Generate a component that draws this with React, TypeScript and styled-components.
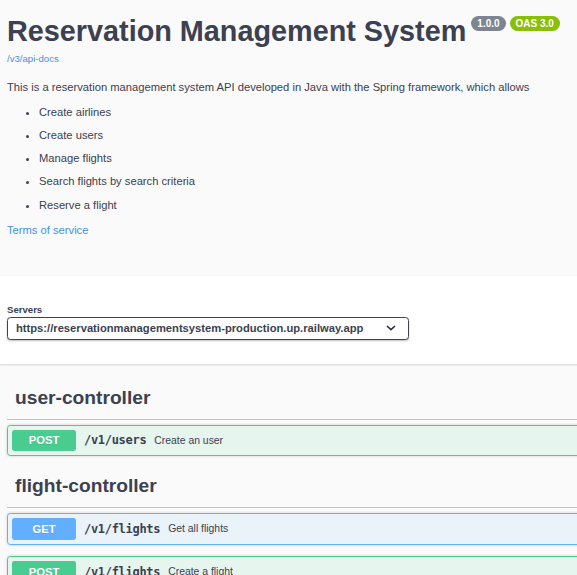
import React from 'react'
import styled, { createGlobalStyle } from 'styled-components'

const GlobalStyle = createGlobalStyle`
  html, body {
    margin: 0;
    padding: 0;
    overflow: hidden;
    background: #fafafa;
  }
  body {
    font-family: "Liberation Sans", Arial, sans-serif;
    color: #3b4151;
  }
`

const Page = styled.div`
  width: 720px;
  background: #fafafa;
`

const Wrapper = styled.div`
  padding: 0 7px;
`

const Info = styled.div`
  padding: 15px 0 37px;
`

const TitleRow = styled.div`
  display: flex;
  align-items: flex-start;
`

const Title = styled.h2`
  margin: 0;
  font-size: 28.8px;
  line-height: 33px;
  font-weight: 700;
  color: #3b4151;
`

const Badge = styled.small<{ $green?: boolean }>`
  display: inline-block;
  margin: 1px 0 0 ${(p) => (p.$green ? '4px' : '5px')};
  padding: 0 6px;
  height: 15px;
  line-height: 15px;
  border-radius: 46px;
  background: ${(p) => (p.$green ? '#89bf04' : '#7d8492')};
  color: #fff;
  font-size: 10px;
  font-weight: 700;
`

const SpecLink = styled.a`
  display: block;
  margin-top: 5px;
  font-size: 9.6px;
  line-height: 11px;
  color: #4990e2;
  text-decoration: none;
`

const Description = styled.p`
  margin: 15px 0 8px;
  font-size: 11.2px;
  line-height: 16.8px;
`

const List = styled.ul`
  margin: 0;
  padding-left: 32px;
`

const Item = styled.li`
  font-size: 11.2px;
  line-height: 16.8px;
  margin-bottom: 6.4px;
`

const Terms = styled.a`
  display: block;
  margin-top: 9px;
  font-size: 11.2px;
  line-height: 16.8px;
  color: #4990e2;
  text-decoration: none;
`

const SchemeContainer = styled.section`
  background: #fff;
  box-shadow: 0 1px 2px 0 rgba(0, 0, 0, 0.15);
  padding: 24px 0;
  margin-bottom: 15px;
`

const ServersTitle = styled.div`
  margin-top: 4px;
  font-size: 9.6px;
  line-height: 12.4px;
  font-weight: 700;
`

const Select = styled.div`
  box-sizing: border-box;
  width: 402px;
  display: flex;
  align-items: center;
  justify-content: space-between;
  padding: 4.5px 12px 4.5px 8px;
  border: 1.5px solid #41444e;
  border-radius: 3.5px;
  background: #fff;
  box-shadow: 0 1px 2px 0 rgba(0, 0, 0, 0.25);
  font-size: 11.2px;
  line-height: 12px;
  font-weight: 700;
  color: #3b4151;
`

const Chevron = () => (
  <svg width="10" height="6" viewBox="0 0 10 6">
    <path d="M1 1l4 3.6L9 1" fill="none" stroke="#2b2f38" strokeWidth="1.6" />
  </svg>
)

const Tag = styled.h3`
  margin: 0 0 5px;
  padding: 8px 16px 10px 8px;
  font-size: 19.2px;
  line-height: 22px;
  font-weight: 700;
  color: #3b4151;
  border-bottom: 1px solid rgba(59, 65, 81, 0.3);
`

const methodColors = {
  GET: '#61affe',
  POST: '#49cc90',
}

const methodBg = {
  GET: 'rgba(97, 175, 254, 0.1)',
  POST: 'rgba(73, 204, 144, 0.1)',
}

type Method = keyof typeof methodColors

const Opblock = styled.div<{ $method: Method }>`
  margin: 0 0 11px;
  border: 1px solid ${(p) => methodColors[p.$method]};
  border-radius: 3.2px;
  background: ${(p) => methodBg[p.$method]};
  box-shadow: 0 0 3px rgba(0, 0, 0, 0.19);
`

const Summary = styled.div`
  display: flex;
  align-items: center;
  padding: 4px;
`

const MethodBadge = styled.span<{ $method: Method }>`
  min-width: 64px;
  padding: 4.8px 0;
  border-radius: 2.4px;
  background: ${(p) => methodColors[p.$method]};
  color: #fff;
  font-size: 11.2px;
  line-height: 12px;
  font-weight: 700;
  text-align: center;
  text-shadow: 0 1px 0 rgba(0, 0, 0, 0.1);
`

const Path = styled.span`
  padding: 0 8px;
  font-family: "DejaVu Sans Mono", monospace;
  font-size: 12px;
  letter-spacing: -0.3px;
  font-weight: 600;
  color: #3b4151;
`

const OpDescription = styled.span`
  font-size: 10.4px;
  color: #3b4151;
`

type Op = { method: Method; path: string; summary: string }

const sections: { name: string; ops: Op[] }[] = [
  {
    name: 'user-controller',
    ops: [{ method: 'POST', path: '/v1/users', summary: 'Create an user' }],
  },
  {
    name: 'flight-controller',
    ops: [
      { method: 'GET', path: '/v1/flights', summary: 'Get all flights' },
      { method: 'POST', path: '/v1/flights', summary: 'Create a flight' },
    ],
  },
]

const features = [
  'Create airlines',
  'Create users',
  'Manage flights',
  'Search flights by search criteria',
  'Reserve a flight',
]

export default function App() {
  return (
    <Page>
      <GlobalStyle />
      <Wrapper>
        <Info>
          <TitleRow>
            <Title>Reservation Management System</Title>
            <Badge>1.0.0</Badge>
            <Badge $green>OAS 3.0</Badge>
          </TitleRow>
          <SpecLink href="#">/v3/api-docs</SpecLink>
          <Description>
            This is a reservation management system API developed in Java with the Spring
            framework, which allows
          </Description>
          <List>
            {features.map((f) => (
              <Item key={f}>{f}</Item>
            ))}
          </List>
          <Terms href="#">Terms of service</Terms>
        </Info>
      </Wrapper>
      <SchemeContainer>
        <Wrapper>
          <ServersTitle>Servers</ServersTitle>
          <Select>
            <span>https://reservationmanagementsystem-production.up.railway.app</span>
            <Chevron />
          </Select>
        </Wrapper>
      </SchemeContainer>
      <Wrapper>
        {sections.map((s) => (
          <div key={s.name}>
            <Tag>{s.name}</Tag>
            {s.ops.map((op) => (
              <Opblock key={op.method + op.path} $method={op.method}>
                <Summary>
                  <MethodBadge $method={op.method}>{op.method}</MethodBadge>
                  <Path>{op.path}</Path>
                  <OpDescription>{op.summary}</OpDescription>
                </Summary>
              </Opblock>
            ))}
          </div>
        ))}
      </Wrapper>
    </Page>
  )
}
